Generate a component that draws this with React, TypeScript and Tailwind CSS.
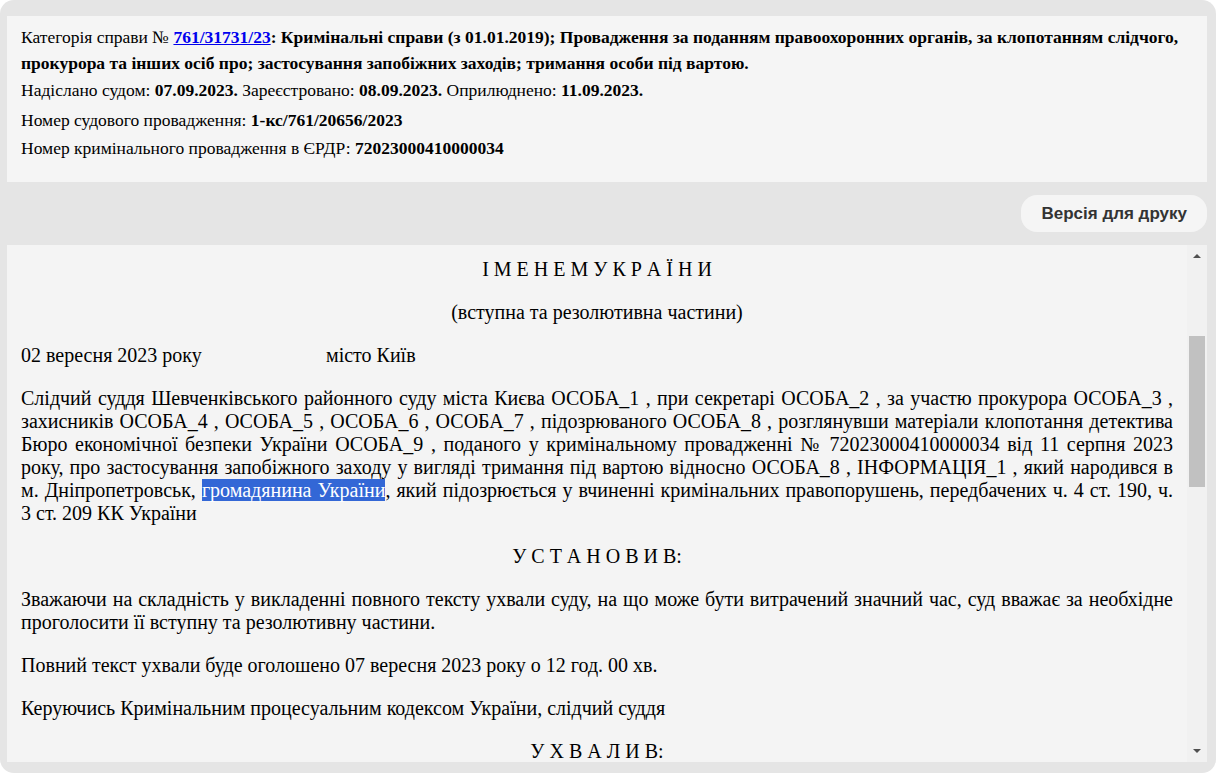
import React from 'react';

const serif = { fontFamily: '"Liberation Serif", "Times New Roman", serif' };

function ScrollBar() {
  return (
    <div className="w-[20px] shrink-0 bg-[#f1f1f1] flex flex-col items-center py-[9px]">
      <div className="w-0 h-0 border-l-[4px] border-r-[4px] border-b-[4px] border-l-transparent border-r-transparent border-b-[#505050]" />
      <div className="flex-1 w-full relative">
        <div className="absolute left-[2px] right-[2px] top-[78px] h-[151px] bg-[#c1c1c1]" />
      </div>
      <div className="w-0 h-0 border-l-[4px] border-r-[4px] border-t-[4px] border-l-transparent border-r-transparent border-t-[#505050]" />
    </div>
  );
}

export default function App() {
  return (
    <div className="min-h-screen bg-white">
      <div className="h-[773px] rounded-[14px] bg-[#e5e5e5] pl-[7px] pr-[9px] pt-4 pb-[11px] flex flex-col">
        <div className="bg-[#f5f5f5] px-[14px] pt-[8px] pb-[21px] text-[17.5px] text-black" style={serif}>
          <div className="leading-[26px]">
            Категорія справи №{' '}
            <a href="#" className="text-[#0000ee] underline font-bold">761/31731/23</a>
            <b>: Кримінальні справи (з 01.01.2019); Провадження за поданням правоохоронних органів, за клопотанням слідчого, прокурора та інших осіб про; застосування запобіжних заходів; тримання особи під вартою.</b>
          </div>
          <div className="leading-[26px] mt-px">
            Надіслано судом: <b>07.09.2023.</b> Зареєстровано: <b>08.09.2023.</b> Оприлюднено: <b>11.09.2023.</b>
          </div>
          <div className="leading-[26px] mt-[4px]">
            Номер судового провадження: <b>1-кс/761/20656/2023</b>
          </div>
          <div className="leading-[26px] mt-[2px]">
            Номер кримінального провадження в ЄРДР: <b>72023000410000034</b>
          </div>
        </div>

        <div className="flex justify-end py-[13px]">
          <button
            className="h-[37px] px-5 rounded-[16px] bg-[#f5f5f5] text-[#333] text-[17px] font-bold"
            style={{ fontFamily: '"Liberation Sans", Arial, sans-serif' }}
          >
            Версія для друку
          </button>
        </div>

        <div className="flex flex-1 min-h-0 bg-[#f4f4f4]">
          <div className="flex-1 min-w-0 overflow-hidden pl-[14px] pr-[14px] pt-[13px] text-[20px] leading-[23px] text-black" style={serif}>
            <p className="text-center">І М Е Н Е М У К Р А Ї Н И</p>
            <p className="text-center mt-5">(вступна та резолютивна частини)</p>
            <p className="mt-5">
              <span className="inline-block w-[305px]">02 вересня 2023 року</span>місто Київ
            </p>
            <p className="mt-5 text-justify">
              Слідчий суддя Шевченківського районного суду міста Києва ОСОБА_1 , при секретарі ОСОБА_2 , за участю прокурора ОСОБА_3 , захисників ОСОБА_4 , ОСОБА_5 , ОСОБА_6 , ОСОБА_7 , підозрюваного ОСОБА_8 , розглянувши матеріали клопотання детектива Бюро економічної безпеки України ОСОБА_9 , поданого у кримінальному провадженні № 72023000410000034 від 11 серпня 2023 року, про застосування запобіжного заходу у вигляді тримання під вартою відносно ОСОБА_8 , ІНФОРМАЦІЯ_1 , який народився в м. Дніпропетровськ, <span className="bg-[#3367d6] text-white">громадянина України</span>, який підозрюється у вчиненні кримінальних правопорушень, передбачених ч. 4 ст. 190, ч. 3 ст. 209 КК України
            </p>
            <p className="text-center mt-5">У С Т А Н О В И В:</p>
            <p className="mt-5 text-justify">
              Зважаючи на складність у викладенні повного тексту ухвали суду, на що може бути витрачений значний час, суд вважає за необхідне проголосити її вступну та резолютивну частини.
            </p>
            <p className="mt-5">Повний текст ухвали буде оголошено 07 вересня 2023 року о 12 год. 00 хв.</p>
            <p className="mt-5">Керуючись Кримінальним процесуальним кодексом України, слідчий суддя</p>
            <p className="text-center mt-5">У Х В А Л И В:</p>
          </div>
          <ScrollBar />
        </div>
      </div>
    </div>
  );
}
